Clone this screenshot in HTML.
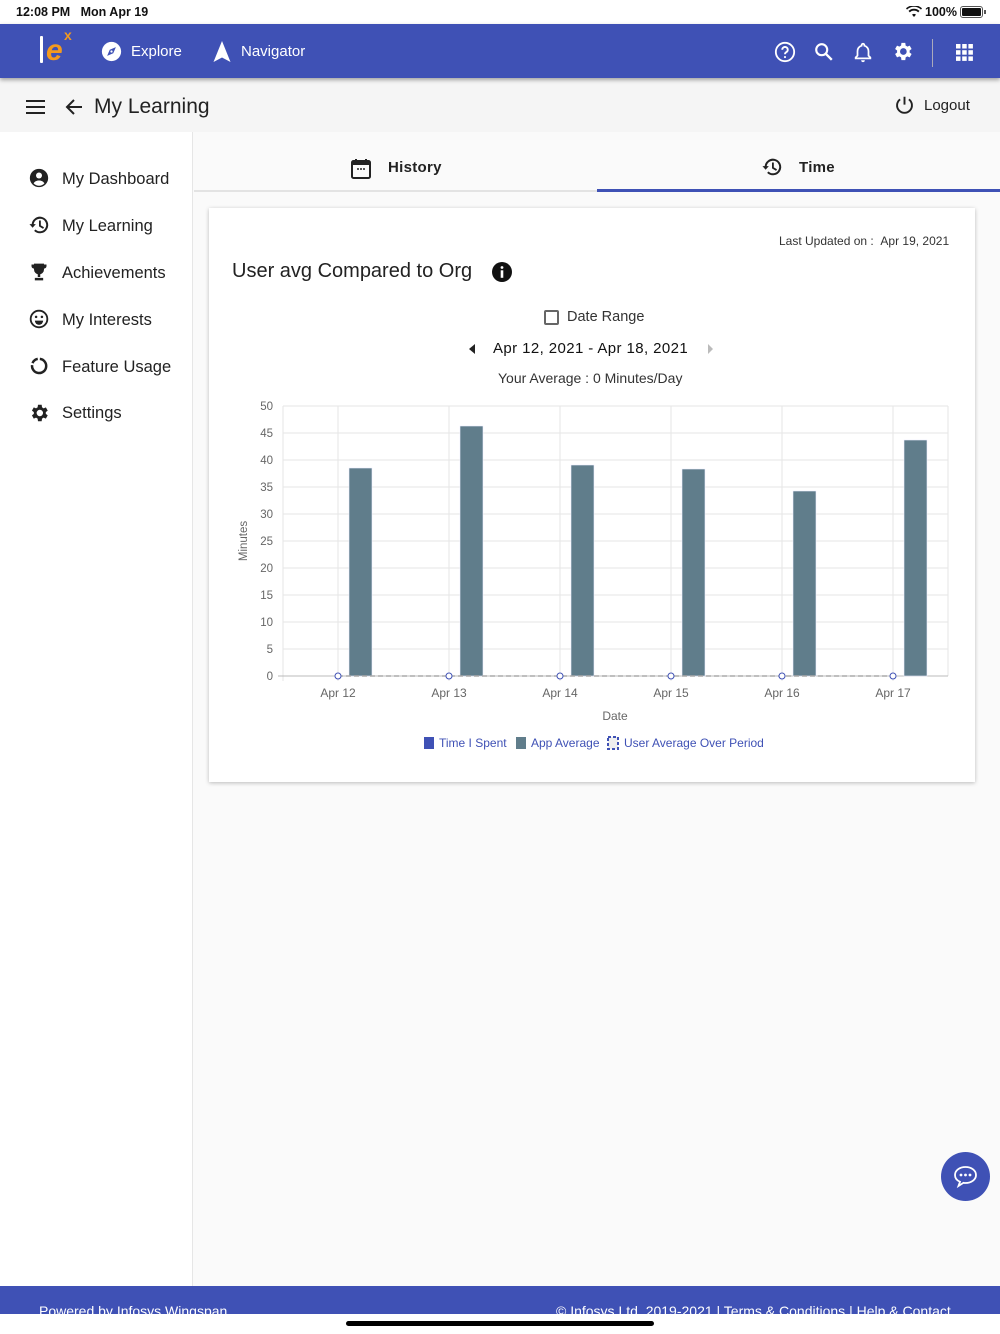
<!DOCTYPE html>
<html><head><meta charset="utf-8"><style>
*{margin:0;padding:0;box-sizing:border-box}
body{width:1000px;height:1334px;position:relative;overflow:hidden;background:#fafafa;font-family:"Liberation Sans",sans-serif;color:#212121}
.a{position:absolute}
.sb{left:0;top:0;width:1000px;height:24px;background:#fff;font-size:12.5px;font-weight:bold;color:#111}
.hd{left:0;top:24px;width:1000px;height:54px;background:#3f51b5;box-shadow:0 2px 4px rgba(0,0,0,.35);z-index:3}
.w{color:#fff;font-size:15px}
.sub{left:0;top:78px;width:1000px;height:54px;background:#f5f5f5}
.side{left:0;top:132px;width:193px;height:1154px;background:#fff;border-right:1px solid #e6e6e6}
.nav{left:62px;font-size:16.5px;color:#222}
.card{left:209px;top:208px;width:766px;height:574px;background:#fff;box-shadow:0 1px 4px rgba(0,0,0,.25)}
</style></head><body>
<div class="a sb"><span class="a" style="left:16px;top:5px">12:08 PM&nbsp;&nbsp;&nbsp;Mon Apr 19</span>
<span class="a" style="left:925px;top:5px">100%</span>
<svg class="a" style="left:906px;top:6px" width="16" height="12" viewBox="0 0 16 12"><path d="M8 11l2-2.4a3 3 0 0 0-4 0z M3.8 6.4a6 6 0 0 1 8.4 0l1.3-1.5a8 8 0 0 0-11 0z M1 3.6a10 10 0 0 1 14 0l1-1.3a12 12 0 0 0-16 0z" fill="#111"/></svg>
<div class="a" style="left:960px;top:6px;width:23px;height:12px;border:1px solid #555;border-radius:3px;padding:1px"><div style="width:100%;height:100%;background:#111;border-radius:1px"></div></div>
<div class="a" style="left:984px;top:10px;width:2px;height:4px;background:#555"></div></div>
<div class="a hd">
<div class="a" style="left:40px;top:12px;width:3px;height:27px;background:#fff;border-radius:1px"></div>
<span class="a" style="left:46px;top:10px;font-size:30px;color:#f39a1e;font-style:italic;font-weight:bold">e</span>
<span class="a" style="left:64px;top:3px;font-size:14px;color:#f39a1e;font-weight:bold">x</span>
<svg class="a" style="left:101px;top:17px" width="21" height="21" viewBox="0 0 24 24"><circle cx="12" cy="12" r="11" fill="#fff"/><path d="M17 7l-3 7-7 3 3-7z" fill="#3f51b5"/><circle cx="12" cy="12" r="1.3" fill="#fff"/></svg>
<span class="a w" style="left:131px;top:19px">Explore</span>
<svg class="a" style="left:213px;top:17px" width="18" height="21" viewBox="0 0 18 21"><path d="M9 0L17.5 21 9 16.5 .5 21z" fill="#fff"/></svg>
<span class="a w" style="left:241px;top:19px">Navigator</span>
<svg class="a" style="left:774px;top:17px" width="22" height="22" viewBox="0 0 24 24"><circle cx="12" cy="12" r="10" fill="none" stroke="#fff" stroke-width="2"/><path d="M9 9.5a3 3 0 1 1 4.5 2.6c-1 .6-1.5 1.2-1.5 2.4" fill="none" stroke="#fff" stroke-width="2"/><circle cx="12" cy="17.5" r="1.2" fill="#fff"/></svg>
<svg class="a" style="left:813px;top:17px" width="22" height="22" viewBox="0 0 24 24"><circle cx="9.5" cy="9.5" r="6" fill="none" stroke="#fff" stroke-width="2.3"/><path d="M14 14l6.5 6.5" stroke="#fff" stroke-width="2.6"/></svg>
<svg class="a" style="left:852px;top:16px" width="22" height="24" viewBox="0 0 24 24"><path d="M12 3a1.5 1.5 0 0 1 1.5 1.5v.6A6 6 0 0 1 18 11v5l2 2v1H4v-1l2-2v-5a6 6 0 0 1 4.5-5.9v-.6A1.5 1.5 0 0 1 12 3z" fill="none" stroke="#fff" stroke-width="1.9"/><path d="M10 21h4a2 2 0 0 1-4 0z" fill="#fff"/></svg>
<svg class="a" style="left:891px;top:16px" width="23" height="23" viewBox="0 0 24 24"><path fill="#fff" d="M19.4 13a7.5 7.5 0 0 0 0-2l2.1-1.6-2-3.5-2.5 1a7.5 7.5 0 0 0-1.7-1L14.9 3h-4l-.4 2.9a7.5 7.5 0 0 0-1.7 1l-2.5-1-2 3.5L6.4 11a7.5 7.5 0 0 0 0 2l-2.1 1.6 2 3.5 2.5-1a7.5 7.5 0 0 0 1.700 1l.4 2.9h4l.4-2.9a7.5 7.5 0 0 0 1.7-1l2.5 1 2-3.5zM12.9 15.5a3.5 3.5 0 1 1 0-7 3.5 3.5 0 0 1 0 7z"/></svg>
<div class="a" style="left:932px;top:15px;width:1px;height:28px;background:#aab"></div>
<svg class="a" style="left:956px;top:20px" width="17" height="17" viewBox="0 0 17 17" fill="#fff"><rect x="0" y="0" width="4.5" height="4.5"/><rect x="6.2" y="0" width="4.5" height="4.5"/><rect x="12.4" y="0" width="4.5" height="4.5"/><rect x="0" y="6.2" width="4.5" height="4.5"/><rect x="6.2" y="6.2" width="4.5" height="4.5"/><rect x="12.4" y="6.2" width="4.5" height="4.5"/><rect x="0" y="12.4" width="4.5" height="4.5"/><rect x="6.2" y="12.4" width="4.5" height="4.5"/><rect x="12.4" y="12.4" width="4.5" height="4.5"/></svg>
</div>
<div class="a sub">
<svg class="a" style="left:26px;top:22px" width="19" height="14" viewBox="0 0 19 14"><path d="M0 1h19M0 7h19M0 13h19" stroke="#222" stroke-width="2"/></svg>
<svg class="a" style="left:65px;top:20px" width="18" height="18" viewBox="0 0 18 18"><path d="M17 9H2M9 2L2 9l7 7" fill="none" stroke="#222" stroke-width="2"/></svg>
<span class="a" style="left:94px;top:17px;font-size:21px;color:#222">My Learning</span>
<svg class="a" style="left:894px;top:17px" width="21" height="21" viewBox="0 0 24 24"><path d="M12 2v9" stroke="#222" stroke-width="2.2"/><path d="M7 5a8.5 8.5 0 1 0 10 0" fill="none" stroke="#222" stroke-width="2.2"/></svg>
<span class="a" style="left:924px;top:19px;font-size:15px;color:#222">Logout</span>
</div>
<div class="a side"></div>
<svg class="a" style="left:29px;top:168px" width="20" height="20" viewBox="0 0 24 24"><circle cx="12" cy="12" r="11" fill="#222"/><circle cx="12" cy="9" r="3.6" fill="#fff"/><path d="M5.5 18.5c1.5-2.6 4-3.5 6.5-3.5s5 .9 6.5 3.5a9 9 0 0 1-13 0z" fill="#fff"/></svg>
<span class="a nav" style="top:170px">My Dashboard</span>
<svg class="a" style="left:28px;top:215px" width="22" height="20" viewBox="0 0 24 22"><path d="M5 11a8 8 0 1 1 2.4 5.7" fill="none" stroke="#222" stroke-width="2.2"/><path d="M1.5 10h7L5 14z" fill="#222"/><path d="M13 6v6l4 2.4" fill="none" stroke="#222" stroke-width="2"/></svg>
<span class="a nav" style="top:217px">My Learning</span>
<svg class="a" style="left:29px;top:262px" width="20" height="20" viewBox="0 0 24 24"><path d="M6 2h12v7a6 6 0 0 1-12 0z M3 3h3v5a3 3 0 0 1-3-3z M21 3h-3v5a3 3 0 0 0 3-3z M10.5 14h3v4h-3z M7 19h10v3H7z" fill="#222"/></svg>
<span class="a nav" style="top:264px">Achievements</span>
<svg class="a" style="left:29px;top:309px" width="20" height="20" viewBox="0 0 24 24"><circle cx="12" cy="12" r="10" fill="none" stroke="#222" stroke-width="2.2"/><circle cx="8.5" cy="9.5" r="1.5" fill="#222"/><circle cx="15.5" cy="9.5" r="1.5" fill="#222"/><path d="M7 14h10a5 5 0 0 1-10 0z" fill="#222"/></svg>
<span class="a nav" style="top:311px">My Interests</span>
<svg class="a" style="left:29px;top:356px" width="20" height="20" viewBox="0 0 24 24"><path d="M13 3.5a8.5 8.5 0 1 1-9.3 7.5" fill="none" stroke="#222" stroke-width="3"/><path d="M10.5 3.5a8.5 8.5 0 0 0-6.3 5" fill="none" stroke="#222" stroke-width="3"/></svg>
<span class="a nav" style="top:358px">Feature Usage</span>
<svg class="a" style="left:28px;top:402px" width="22" height="22" viewBox="0 0 24 24"><path fill="#222" d="M19.4 13a7.5 7.5 0 0 0 0-2l2.1-1.6-2-3.5-2.5 1a7.5 7.5 0 0 0-1.7-1L14.9 3h-4l-.4 2.9a7.5 7.5 0 0 0-1.7 1l-2.5-1-2 3.5L6.4 11a7.5 7.5 0 0 0 0 2l-2.1 1.6 2 3.5 2.5-1a7.5 7.5 0 0 0 1.7 1l.4 2.9h4l.4-2.9a7.5 7.5 0 0 0 1.7-1l2.5 1 2-3.5zM12.9 15.5a3.5 3.5 0 1 1 0-7 3.5 3.5 0 0 1 0 7z"/></svg>
<span class="a nav" style="top:404px">Settings</span>
<div class="a" style="left:194px;top:190px;width:806px;height:2px;background:#e3e3e3"></div>
<div class="a" style="left:597px;top:189px;width:403px;height:3px;background:#3f51b5"></div>
<svg class="a" style="left:351px;top:158px" width="20" height="21" viewBox="0 0 20 21"><rect x="1" y="3" width="18" height="17" rx="1.5" fill="none" stroke="#222" stroke-width="2"/><rect x="1" y="3" width="18" height="4" fill="#222"/><path d="M5 1v4M15 1v4" stroke="#222" stroke-width="2"/><path d="M6 11h2M9 11h2M12 11h2" stroke="#222" stroke-width="1.5"/></svg>
<span class="a" style="left:388px;top:159px;font-size:15px;font-weight:bold;color:#222;letter-spacing:.3px">History</span>
<svg class="a" style="left:761px;top:157px" width="22" height="20" viewBox="0 0 24 22"><path d="M5 11a8 8 0 1 1 2.4 5.7" fill="none" stroke="#222" stroke-width="2.2"/><path d="M1.5 10h7L5 14z" fill="#222"/><path d="M13 6v6l4 2.4" fill="none" stroke="#222" stroke-width="2"/></svg>
<span class="a" style="left:799px;top:159px;font-size:15px;font-weight:bold;color:#222;letter-spacing:.3px">Time</span>
<div class="a card"></div>
<span class="a" style="left:779px;top:234px;font-size:12px;color:#333">Last Updated on :&nbsp;&nbsp;Apr 19, 2021</span>
<span class="a" style="left:232px;top:260px;font-size:20px;color:#222">User avg Compared to Org</span>
<svg class="a" style="left:492px;top:262px" width="20" height="20" viewBox="0 0 20 20"><circle cx="10" cy="10" r="10" fill="#111"/><circle cx="10" cy="5.5" r="1.4" fill="#fff"/><rect x="8.7" y="8.3" width="2.6" height="7.5" fill="#fff"/></svg>
<div class="a" style="left:544px;top:310px;width:15px;height:15px;border:2px solid #666;border-radius:2px"></div>
<span class="a" style="left:567px;top:309px;font-size:14.5px;color:#333">Date Range</span>
<svg class="a" style="left:469px;top:344px" width="8" height="10"><path d="M6 0v10L0 5z" fill="#222"/></svg>
<span class="a" style="left:493px;top:340px;font-size:15px;color:#111;letter-spacing:.4px">Apr 12, 2021 - Apr 18, 2021</span>
<svg class="a" style="left:707px;top:344px" width="8" height="10"><path d="M1 0v10l5-5z" fill="#bbb"/></svg>
<span class="a" style="left:498px;top:370px;font-size:14px;color:#333">Your Average : 0 Minutes/Day</span>
<svg class="a" style="left:0;top:0" width="1000" height="800" font-family="Liberation Sans" font-size="11.5" fill="#666">
<g stroke="#e5e5e5" stroke-width="1">
<path d="M283 406H948M283 433H948M283 460H948M283 487H948M283 514H948M283 541H948M283 568H948M283 595H948M283 622H948M283 649H948"/>
<path d="M283 406V681M338 406V681M449 406V681M560 406V681M671 406V681M782 406V681M893 406V681M948 406V676"/>
</g>
<path d="M278 676H948" stroke="#bbb"/>
<g text-anchor="end"><text x="273" y="410">50</text><text x="273" y="437">45</text><text x="273" y="464">40</text><text x="273" y="491">35</text><text x="273" y="518">30</text><text x="273" y="545">25</text><text x="273" y="572">20</text><text x="273" y="599">15</text><text x="273" y="626">10</text><text x="273" y="653">5</text><text x="273" y="680">0</text></g>
<text transform="translate(247 541) rotate(-90)" text-anchor="middle">Minutes</text>
<g fill="#607d8b" stroke="#eef" stroke-width=".6"><rect x="349" y="468" width="23" height="208"/><rect x="460" y="426" width="23" height="250"/><rect x="571" y="465" width="23" height="211"/><rect x="682" y="469" width="23" height="207"/><rect x="793" y="491" width="23" height="185"/><rect x="904" y="440" width="23" height="236"/></g>
<path d="M338 676H893" stroke="#aaa" stroke-dasharray="5 3" stroke-width="1.5"/>
<g fill="#fff" stroke="#3f51b5" stroke-width="1"><circle cx="338" cy="676" r="3"/><circle cx="449" cy="676" r="3"/><circle cx="560" cy="676" r="3"/><circle cx="671" cy="676" r="3"/><circle cx="782" cy="676" r="3"/><circle cx="893" cy="676" r="3"/></g>
<g text-anchor="middle" font-size="12"><text x="338" y="697">Apr 12</text><text x="449" y="697">Apr 13</text><text x="560" y="697">Apr 14</text><text x="671" y="697">Apr 15</text><text x="782" y="697">Apr 16</text><text x="893" y="697">Apr 17</text><text x="615" y="720">Date</text></g>
<rect x="424" y="737" width="10" height="12" fill="#3f51b5"/>
<rect x="516" y="737" width="10" height="12" fill="#607d8b"/>
<rect x="608" y="737" width="10" height="12" fill="#eee" stroke="#3f51b5" stroke-width="2" stroke-dasharray="3 2"/>
<g fill="#3f51b5" font-size="12"><text x="439" y="747">Time I Spent</text><text x="531" y="747">App Average</text><text x="624" y="747">User Average Over Period</text></g>
</svg>
<div class="a" style="left:941px;top:1152px;width:49px;height:49px;border-radius:50%;background:#3f51b5"></div>
<svg class="a" style="left:953px;top:1165px" width="25" height="24" viewBox="0 0 25 24"><path d="M12.5 2C6.5 2 2 5.5 2 10c0 3 2 5.5 5 6.8L5.5 21l5-3.2c.7.1 1.3.2 2 .2 6 0 10.5-3.5 10.5-8S18.5 2 12.5 2z" fill="none" stroke="#fff" stroke-width="1.8"/><circle cx="8" cy="10" r="1.4" fill="#fff"/><circle cx="12.5" cy="10" r="1.4" fill="#fff"/><circle cx="17" cy="10" r="1.4" fill="#fff"/></svg>
<div class="a" style="left:0;top:1286px;width:1000px;height:28px;background:#3f51b5;overflow:hidden;color:#fff;font-size:14px">
<span class="a" style="left:39px;top:17px">Powered by Infosys Wingspan</span>
<span class="a" style="left:556px;top:17px">© Infosys Ltd. 2019-2021 | Terms &amp; Conditions | Help &amp; Contact</span></div>
<div class="a" style="left:0;top:1314px;width:1000px;height:20px;background:#fff"></div>
<div class="a" style="left:346px;top:1321px;width:308px;height:5px;border-radius:3px;background:#000"></div>
</body></html>
